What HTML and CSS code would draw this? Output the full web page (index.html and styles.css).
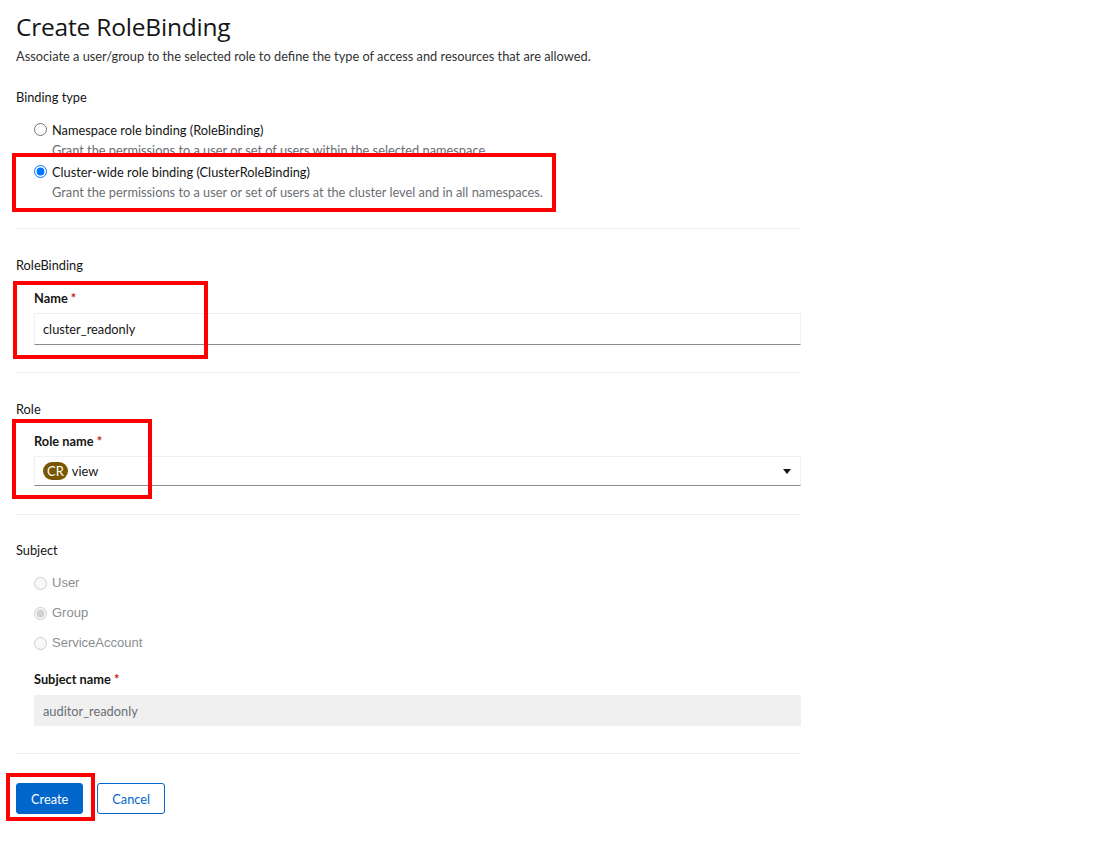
FILE: index.html
```html
<!DOCTYPE html>
<html lang="en">
  <head>
    <meta charset="UTF-8" />
    <meta name="viewport" content="width=device-width, initial-scale=1.0" />
    <title>Create RoleBinding</title>
    <link rel="stylesheet" href="styles.css">
  </head>
  <body>
    <main class="page">
      <h1 class="page__title">Create RoleBinding</h1>
      <p class="page__help">
        Associate a user/group to the selected role to define the type of access and resources that are allowed.
      </p>

      <form class="rb-form">
        <section class="rb-section">
          <h2 class="rb-section__title">Binding type</h2>
          <div class="radio-list">
            <label class="radio">
              <input type="radio" name="kind" value="RoleBinding" />
              <span class="radio__text">
                <span class="radio__label">Namespace role binding (RoleBinding)</span>
                <span class="radio__desc">Grant the permissions to a user or set of users within the selected namespace.</span>
              </span>
            </label>
            <label class="radio">
              <input type="radio" name="kind" value="ClusterRoleBinding" checked />
              <span class="radio__text">
                <span class="radio__label">Cluster-wide role binding (ClusterRoleBinding)</span>
                <span class="radio__desc">Grant the permissions to a user or set of users at the cluster level and in all namespaces.</span>
              </span>
            </label>
          </div>
        </section>

        <section class="rb-section">
          <h2 class="rb-section__title">RoleBinding</h2>
          <div class="field">
            <label class="field__label" for="rb-name">Name <span class="req">*</span></label>
            <input class="field__input" id="rb-name" type="text" value="cluster_readonly" />
          </div>
        </section>

        <section class="rb-section rb-section--role">
          <h2 class="rb-section__title">Role</h2>
          <div class="field field--role">
            <span class="field__label">Role name <span class="req">*</span></span>
            <button type="button" class="dropdown">
              <span class="badge">CR</span>
              <span class="dropdown__value">view</span>
              <span class="dropdown__caret"></span>
            </button>
          </div>
        </section>

        <section class="rb-section rb-section--subject">
          <h2 class="rb-section__title">Subject</h2>
          <div class="subject-list">
            <label class="subject"><input type="radio" name="subject" disabled /> User</label>
            <label class="subject"><input type="radio" name="subject" checked disabled /> Group</label>
            <label class="subject"><input type="radio" name="subject" disabled /> ServiceAccount</label>
          </div>
          <div class="field field--subject">
            <label class="field__label" for="rb-subject">Subject name <span class="req">*</span></label>
            <input class="field__input field__input--disabled" id="rb-subject" type="text" value="auditor_readonly" disabled />
          </div>
        </section>

        <div class="actions">
          <button type="submit" class="btn btn--primary">Create</button>
          <button type="button" class="btn btn--secondary">Cancel</button>
        </div>
      </form>

      <!-- highlight marks over the fields that were filled in -->
      <div class="mark mark--kind"></div>
      <div class="mark mark--name"></div>
      <div class="mark mark--role"></div>
      <div class="mark mark--create"></div>
    </main>
  </body>
</html>
```

FILE: styles.css
```css
* {
  margin: 0;
  padding: 0;
  box-sizing: border-box;
}

body {
  font-family: Lato, "Open Sans", sans-serif;
  font-size: 12.8px;
  line-height: 18px;
  color: #151515;
  background-color: #fff;
}

.page {
  position: relative;
  padding: 12px 16px 40px 16px;
  width: 817px;
}

.page__title {
  font-family: "Open Sans", sans-serif;
  font-size: 24.5px;
  line-height: 29px;
  font-weight: 400;
  letter-spacing: -0.2px;
}

.page__help {
  margin-top: 6px;
  color: #333;
}

.rb-section {
  padding: 23px 0 27px 0;
  border-bottom: 1px solid #ededed;
}

.rb-section + .rb-section {
  padding-top: 27px;
}

.rb-section--role {
  padding-bottom: 28px;
}

.rb-section--subject {
  padding-top: 26px !important;
}

.rb-section__title {
  font-size: 12.8px;
  font-weight: 400;
  line-height: 18px;
}

/* binding type radios */
.radio-list {
  margin-top: 15px;
  padding-left: 18px;
  display: flex;
  flex-direction: column;
  gap: 4px;
}

.radio {
  display: flex;
  align-items: flex-start;
  gap: 5px;
}

.radio input {
  margin: 2px 0 0 0;
  width: 13px;
  height: 13px;
}

.radio__text {
  display: flex;
  flex-direction: column;
  gap: 2px;
}

.radio__desc {
  color: #6a6e73;
}

/* text fields */
.field {
  margin-top: 15px;
  padding-left: 18px;
  display: flex;
  flex-direction: column;
  gap: 6px;
}

.field--role {
  margin-top: 14px;
}

.field__label {
  font-weight: 700;
}

.req {
  color: #c9190b;
}

.field__input {
  height: 32px;
  padding: 0 8px;
  font: inherit;
  color: #151515;
  border: 1px solid #f0f0f0;
  border-bottom-color: #8a8d90;
  outline: none;
}

.field__input--disabled {
  height: 31px;
  background-color: #f0f0f0;
  border-color: #f0f0f0;
  color: #6a6e73;
}

.field--subject {
  margin-top: 18px;
  gap: 7px;
}

/* role select */
.dropdown {
  height: 30px;
  padding: 0 8px;
  display: flex;
  align-items: center;
  gap: 4px;
  background: #fff;
  font: inherit;
  color: #151515;
  border: 1px solid #f0f0f0;
  border-bottom-color: #8a8d90;
  text-align: left;
}

.badge {
  background-color: #795600;
  color: #fff;
  border-radius: 9px;
  padding: 0 4px;
  font-size: 13px;
  line-height: 18px;
}

.dropdown__value {
  flex: 1;
}

.dropdown__caret {
  width: 0;
  height: 0;
  border-left: 4px solid transparent;
  border-right: 4px solid transparent;
  border-top: 5px solid #151515;
  margin-right: 1px;
}

/* subject kinds */
.subject-list {
  margin-top: 15px;
  padding-left: 18px;
  display: flex;
  flex-direction: column;
  gap: 12px;
}

.subject {
  display: flex;
  align-items: center;
  gap: 5px;
  font-family: "Liberation Sans", Arial, sans-serif;
  font-size: 13px;
  color: #8a8d90;
}

.subject input {
  margin: 0;
  width: 13px;
  height: 13px;
}

/* buttons */
.actions {
  margin-top: 29px;
  display: flex;
  gap: 14px;
}

.btn {
  height: 31px;
  padding: 0 14px;
  font: inherit;
  border-radius: 3px;
  cursor: pointer;
}

.btn--primary {
  background-color: #06c;
  color: #fff;
  border: 1px solid #06c;
}

.btn--secondary {
  background-color: #fff;
  color: #06c;
  border: 1px solid #06c;
}

/* red highlight marks */
.mark {
  position: absolute;
  border: 4px solid #f00;
  pointer-events: none;
}

.mark--kind {
  left: 12px;
  top: 153px;
  width: 544px;
  height: 59px;
}

.mark--name {
  left: 13px;
  top: 281px;
  width: 195px;
  height: 78px;
}

.mark--role {
  left: 12px;
  top: 419px;
  width: 140px;
  height: 80px;
}

.mark--create {
  left: 6px;
  top: 773px;
  width: 89px;
  height: 48px;
}
```
